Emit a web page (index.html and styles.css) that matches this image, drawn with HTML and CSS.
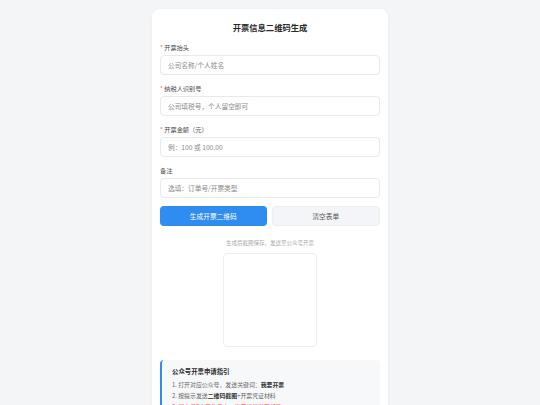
FILE: index.html
```html
<!DOCTYPE html>
<html lang="zh-CN">
<head>
  <meta charset="UTF-8">
  <meta name="viewport" content="width=device-width, initial-scale=1.0">
  <title>开票信息二维码生成</title>
  <link rel="stylesheet" href="styles.css">
</head>
<body>
  <div class="card">
    <h1 class="title">开票信息二维码生成</h1>

    <div class="field">
      <label class="label"><span class="req">*</span> 开票抬头</label>
      <input class="input" type="text" placeholder="公司名称/个人姓名">
    </div>
    <div class="field">
      <label class="label"><span class="req">*</span> 纳税人识别号</label>
      <input class="input" type="text" placeholder="公司填税号，个人留空即可">
    </div>
    <div class="field">
      <label class="label"><span class="req">*</span> 开票金额（元）</label>
      <input class="input" type="text" placeholder="例：100 或 100.00">
    </div>
    <div class="field">
      <label class="label">备注</label>
      <input class="input" type="text" placeholder="选填：订单号/开票类型">
    </div>

    <div class="actions">
      <button class="btn btn-primary">生成开票二维码</button>
      <button class="btn btn-plain">清空表单</button>
    </div>

    <p class="hint">生成后截图保存，发送至公众号开票</p>
    <div class="qr"></div>

    <div class="guide">
      <div class="guide-title">公众号开票申请指引</div>
      <div class="guide-line">1. 打开对应公众号，发送关键词：<b>我要开票</b></div>
      <div class="guide-line">2. 按提示发送<b>二维码截图</b>+开票凭证材料</div>
      <div class="guide-line warn">3. 提交后3个工作日内，发票将发送至邮箱</div>
    </div>
  </div>
</body>
</html>
```

FILE: styles.css
```css
body {
  margin: 0;
  background: #f4f5f7;
  font-family: "Noto Sans CJK SC", "Noto Sans", sans-serif;
  color: #333;
}

.card {
  width: 220px;
  margin: 9px auto 0;
  padding: 12px 8px 12px;
  background: #fff;
  border-radius: 8px;
  box-shadow: 0 1px 4px rgba(0, 0, 0, 0.05);
}

.title {
  margin: 0 0 9px;
  font-size: 8.3px;
  line-height: 13px;
  font-weight: 700;
  text-align: center;
  color: #2a2a2a;
}

.field {
  display: flex;
  flex-direction: column;
  gap: 2px;
  margin-bottom: 9px;
}

.label {
  font-size: 6.2px;
  line-height: 10px;
  color: #4a4a4a;
}

.req {
  color: #f56c6c;
}

.input {
  box-sizing: border-box;
  height: 20px;
  padding: 0 7px;
  border: 1px solid #e8e9ec;
  border-radius: 4px;
  font-family: inherit;
  font-size: 6.7px;
  color: #333;
  outline: none;
}

.input::placeholder {
  color: #8a8a8a;
}

.actions {
  display: flex;
  gap: 5px;
  margin-top: -1px;
}

.btn {
  flex: 1;
  height: 20px;
  border-radius: 4px;
  font-family: inherit;
  font-size: 6.7px;
  cursor: pointer;
}

.btn-primary {
  background: #2f8cf0;
  border: none;
  color: #fff;
}

.btn-plain {
  background: #f4f5f8;
  border: 1px solid #eceef1;
  color: #555;
}

.hint {
  margin: 13px 0 6px;
  font-size: 5.5px;
  line-height: 8px;
  text-align: center;
  color: #aaa;
}

.qr {
  width: 92px;
  height: 92px;
  margin: 0 auto;
  border: 1px solid #eeeff1;
  border-radius: 4px;
}

.guide {
  margin-top: 13px;
  padding: 7px 10px 6px;
  background: #f7f8fa;
  border-left: 2px solid #2f8cf0;
  border-radius: 4px;
}

.guide-title {
  margin-bottom: 2px;
  font-size: 6.4px;
  line-height: 10px;
  font-weight: 700;
  color: #2a2a2a;
}

.guide-line {
  font-size: 5.9px;
  line-height: 11px;
  color: #666;
}

.guide-line b {
  color: #333;
}

.guide-line.warn {
  color: #f04848;
}
```
